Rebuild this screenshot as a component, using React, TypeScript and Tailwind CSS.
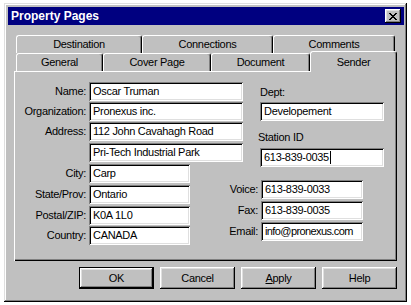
import type { ReactNode } from 'react';

// Win98-style "Property Pages" dialog, Sender tab

const raised =
  'shadow-[inset_-1px_-1px_#000,inset_1px_1px_#fff,inset_-2px_-2px_#808080,inset_2px_2px_#dfdfdf]';
const sunken =
  'shadow-[inset_1px_1px_#808080,inset_-1px_-1px_#fff,inset_2px_2px_#000,inset_-2px_-2px_#dfdfdf]';

const Field = ({ value, w, cursor, tight }: { value?: string; w: string; cursor?: boolean; tight?: boolean }) => (
  <div
    className={`${w} h-[19px] bg-white ${sunken} pl-[4px] flex items-center text-black whitespace-nowrap overflow-hidden ${
      tight ? 'tracking-[-0.6px]' : ''
    }`}
  >
    {value}
    {cursor && <span className="inline-block w-px h-[13px] bg-black ml-px" />}
  </div>
);

const Tab = ({ label, w }: { label: string; w: string }) => (
  <div
    className={`${w} h-[18px] border-t border-l border-r border-white border-r-black rounded-t-[3px] shadow-[inset_-1px_0_#808080] flex items-center justify-center`}
  >
    {label}
  </div>
);

// Left column rows: label, value, input width, top margin
const leftRows = [
  { label: 'Name:', value: 'Oscar Truman', w: 'w-[154px]', mt: 'mt-0' },
  { label: 'Organization:', value: 'Pronexus inc.', w: 'w-[154px]', mt: 'mt-[1px]' },
  { label: 'Address:', value: '112 John Cavahagh Road', w: 'w-[154px]', mt: 'mt-[1px]' },
  { label: '', value: 'Pri-Tech Industrial Park', w: 'w-[154px]', mt: 'mt-[2px]' },
  { label: 'City:', value: 'Carp', w: 'w-[101px]', mt: 'mt-[2px]' },
  { label: 'State/Prov:', value: 'Ontario', w: 'w-[101px]', mt: 'mt-[2px]' },
  { label: 'Postal/ZIP:', value: 'K0A 1L0', w: 'w-[101px]', mt: 'mt-[2px]' },
  { label: 'Country:', value: 'CANADA', w: 'w-[101px]', mt: 'mt-[1px]' },
];

const contactRows = [
  { label: 'Voice:', value: '613-839-0033', mt: 'mt-[13px]' },
  { label: 'Fax:', value: '613-839-0035', mt: 'mt-[2px]' },
  { label: 'Email:', value: 'info@pronexus.com', mt: 'mt-[2px]' },
];

const Button = ({ children, isDefault }: { children: ReactNode; isDefault?: boolean }) => (
  <div
    className={`w-[75px] h-[22px] bg-[#c0c0c0] ${raised} flex items-center justify-center ${
      isDefault ? 'border border-black' : ''
    }`}
  >
    {children}
  </div>
);

export default function App() {
  return (
    <div className="w-[411px] h-[305px] bg-white pt-[3px] pl-[4px] font-['Liberation_Sans',Arial,sans-serif] text-[11px] tracking-[-0.3px] text-black leading-[13px]">
      {/* Window frame */}
      <div className="w-[403px] h-[299px] bg-[#c0c0c0] shadow-[inset_-1px_-1px_#000,inset_1px_1px_#dfdfdf,inset_-2px_-2px_#808080,inset_2px_2px_#fff] pt-[4px] pl-[4px] pr-[3px]">
        {/* Title bar */}
        <div className="h-[18px] bg-[#000080] flex items-center justify-between pl-[3px] pr-[3px]">
          <span className="text-white font-bold text-[12px] tracking-normal">Property Pages</span>
          <div className={`w-[16px] h-[14px] bg-[#c0c0c0] ${raised} flex items-center justify-center`}>
            <svg width="8" height="7" viewBox="0 0 8 7" shapeRendering="crispEdges">
              <path d="M0 0h2v1h-2zM6 0h2v1h-2zM1 1h2v1h-2zM5 1h2v1h-2zM2 2h4v1h-4zM3 3h2v1h-2zM2 4h4v1h-4zM1 5h2v1h-2zM5 5h2v1h-2zM0 6h2v1h-2zM6 6h2v1h-2z" fill="#000" />
            </svg>
          </div>
        </div>

        {/* Tab rows */}
        <div className="mt-[10px] ml-[8px] flex">
          <Tab label="Destination" w="w-[126px]" />
          <Tab label="Connections" w="w-[131px]" />
          <Tab label="Comments" w="w-[122px]" />
        </div>
        <div className="ml-[8px] flex h-[18px] relative z-10">
          <Tab label="General" w="w-[87px]" />
          <Tab label="Cover Page" w="w-[108px]" />
          <Tab label="Document" w="w-[99px]" />
          <div className="w-[87px] h-[21px] -mt-[2px] bg-[#c0c0c0] border-t border-l border-r border-white border-r-black rounded-t-[3px] shadow-[inset_-1px_0_#808080] flex items-center justify-center">
            Sender
          </div>
        </div>

        {/* Tab panel */}
        <div className="ml-[6px] w-[383px] h-[190px] shadow-[inset_1px_1px_#fff,inset_-1px_-1px_#000,inset_-2px_-2px_#808080] pt-[11px] flex">
          {/* Address block */}
          <div className="grid grid-cols-[72px_auto] gap-x-[3px] content-start">
            {leftRows.map((r, i) => (
              <div key={i} className="contents">
                <div className={`${r.mt} h-[19px] flex items-center justify-end whitespace-nowrap`}>{r.label}</div>
                <div className={r.mt}>
                  <Field value={r.value} w={r.w} />
                </div>
              </div>
            ))}
          </div>

          {/* Dept / station / contact block */}
          <div className="ml-[15px] flex flex-col">
            <div className="mt-[4px] ml-[2px] h-[13px]">Dept:</div>
            <div className="mt-[3px] ml-[2px]">
              <Field value="Developement" w="w-[124px]" />
            </div>
            <div className="mt-[10px] h-[13px]">Station ID</div>
            <div className="mt-[4px] ml-[2px]">
              <Field value="613-839-0035" w="w-[124px]" cursor />
            </div>
            {contactRows.map((r) => (
              <div key={r.label} className={`${r.mt} flex items-center`}>
                <div className="-ml-[40px] w-[40px] text-right">{r.label}</div>
                <div className="ml-[3px]">
                  <Field value={r.value} w="w-[102px]" tight={r.label === 'Email:'} />
                </div>
              </div>
            ))}
          </div>
        </div>

        {/* Dialog buttons */}
        <div className="mt-[6px] pr-[7px] flex justify-end gap-[6px]">
          <Button isDefault>OK</Button>
          <Button>Cancel</Button>
          <Button>
            <span className="underline">A</span>pply
          </Button>
          <Button>Help</Button>
        </div>
      </div>
    </div>
  );
}
